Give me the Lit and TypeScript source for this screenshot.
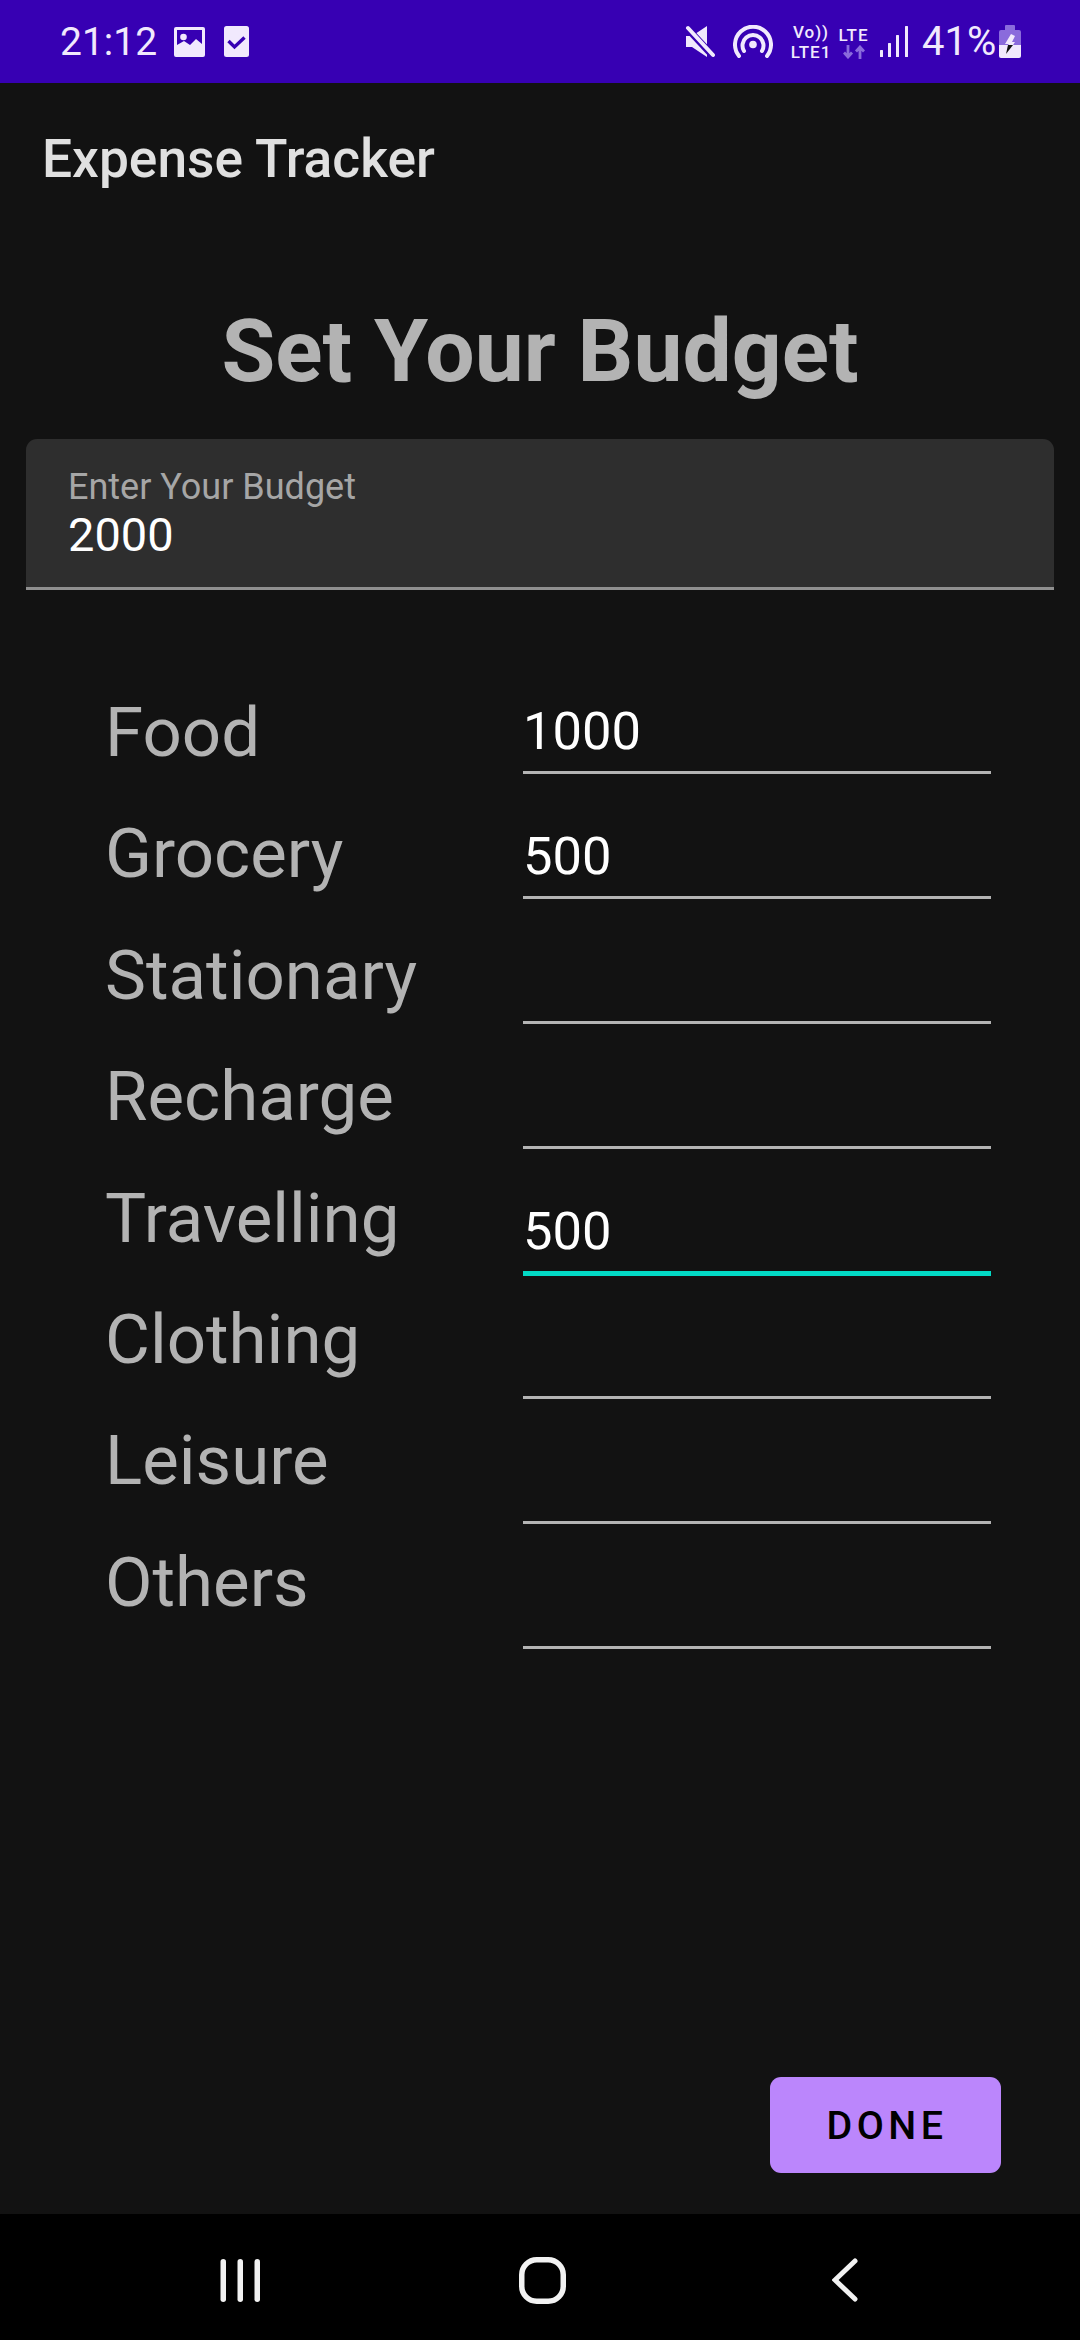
import { css, html, LitElement, svg } from "lit";
import { customElement } from "lit/decorators.js";

const CATEGORIES = [
  { name: "Food", value: "1000" },
  { name: "Grocery", value: "500" },
  { name: "Stationary", value: "" },
  { name: "Recharge", value: "" },
  { name: "Travelling", value: "500", focused: true },
  { name: "Clothing", value: "" },
  { name: "Leisure", value: "" },
  { name: "Others", value: "" },
];

const imageIcon = svg`<svg class="icon" width="31" height="30" viewBox="0 0 31 30">
  <path fill-rule="evenodd" fill="#f1e9fd" d="M2 0h27a2 2 0 0 1 2 2v26a2 2 0 0 1-2 2H2a2 2 0 0 1-2-2V2a2 2 0 0 1 2-2zM3 3v15l7-4 6 4 6-6 6 5V3z"/>
  <circle cx="9.500" cy="10" r="3.300" fill="#f1e9fd"/>
</svg>`;

const checkIcon = svg`<svg class="icon" width="25" height="31" viewBox="0 0 25 31">
  <rect width="25" height="31" rx="2.500" fill="#f1e9fd"/>
  <path d="M4.500 15l6 6 10-9.500" fill="none" stroke="#3700b3" stroke-width="3.400"/>
</svg>`;

const muteIcon = svg`<svg width="30" height="33" viewBox="0 0 30 33">
  <path fill="#f1e9fd" d="M1 11h6L22 1v31L7 22H1z"/>
  <path d="M1 2l27 29" stroke="#3700b3" stroke-width="7"/>
  <path d="M3 3l25 27" stroke="#f1e9fd" stroke-width="4" stroke-linecap="round"/>
</svg>`;

const hotspotIcon = svg`<svg width="40" height="34" viewBox="0 0 40 34" fill="none" stroke="#f1e9fd" stroke-width="4" stroke-linecap="round">
  <path d="M6 31a18 18 0 1 1 28 0"/>
  <path d="M11 26a10.500 10.500 0 1 1 18 0"/>
  <circle cx="20" cy="19.500" r="3.800" fill="#f1e9fd" stroke="none"/>
</svg>`;

const arrowsIcon = svg`<svg width="22" height="14" viewBox="0 0 22 14" fill="none" stroke="#8a6bdc" stroke-width="2.800">
  <path d="M5 0v12M1 7.500L5 12l4-4.500"/>
  <path d="M17 14V2M13 6.500L17 2l4 4.500"/>
</svg>`;

const signalIcon = svg`<svg width="28" height="31" viewBox="0 0 28 31" fill="#f1e9fd">
  <rect x="0" y="24" width="3" height="7" rx="0.500"/>
  <rect x="8" y="17" width="3" height="14" rx="0.500"/>
  <rect x="16" y="9" width="3" height="22" rx="0.500"/>
  <rect x="25" y="0" width="3" height="31" rx="0.500"/>
</svg>`;

const batteryIcon = svg`<svg width="22" height="33" viewBox="0 0 22 33">
  <path fill="#8a6bdc" d="M6 1a1 1 0 0 1 1-1h8a1 1 0 0 1 1 1v4h4a2 2 0 0 1 2 2v13H0V7a2 2 0 0 1 2-2h4z"/>
  <path fill="#f1e9fd" d="M0 20h22v11a2 2 0 0 1-2 2H2a2 2 0 0 1-2-2z"/>
  <path fill="#f1e9fd" d="M12 9L6 19h4l-1 1h5l2-3h-3l3-6z"/>
  <path fill="#111" d="M9 20h5l-7 9z"/>
</svg>`;

@customElement("app-root")
export class AppRoot extends LitElement {
  static styles = [
    css`
      :host {
        display: flex;
        flex-direction: column;
        height: 2340px;
        background-color: #121212;
        font-family: Roboto, "Liberation Sans", sans-serif;
      }

      .status-bar {
        display: flex;
        align-items: center;
        justify-content: space-between;
        height: 83px;
        flex: none;
        padding: 0 59px 0 60px;
        box-sizing: border-box;
        background-color: #3700b3;
        color: #f1e9fd;
      }

      .status-left,
      .status-right {
        display: flex;
        align-items: center;
      }

      .time {
        font-size: 39px;
        margin-right: 17px;
      }

      .icon + .icon {
        margin-left: 19px;
      }

      .status-right svg {
        flex: none;
      }

      .hotspot {
        display: flex;
        margin: 0 19px 0 18px;
      }

      .mini {
        display: flex;
        flex-direction: column;
        align-items: center;
        width: 38px;
        font-size: 17px;
        line-height: 20px;
        font-weight: 500;
        letter-spacing: 1px;
        white-space: nowrap;
      }

      .net {
        width: 31px;
        margin: 0 11px 0 8px;
      }

      .battery-pct {
        width: 70px;
        font-size: 40px;
        white-space: nowrap;
        margin: 0 7px 0 14px;
      }

      main {
        flex: 1;
        display: flex;
        flex-direction: column;
      }

      .app-title {
        margin: 0;
        padding: 46px 0 0 42px;
        font-size: 53.300px;
        line-height: 60px;
        font-weight: 500;
        color: #e0e0e0;
      }

      h1 {
        margin: 0;
        padding-top: 112px;
        font-size: 87.500px;
        line-height: 100px;
        font-weight: 700;
        text-align: center;
        color: #b3b3b3;
      }

      .budget {
        margin: 38px 26px 0;
        height: 151px;
        box-sizing: border-box;
        padding: 25px 42px 0;
        border-radius: 11px 11px 0 0;
        border-bottom: 3px solid #8f8f8f;
        background-color: #2e2e2e;
      }

      .budget-label {
        font-size: 36px;
        line-height: 46px;
        color: #a6a6a6;
      }

      .budget-value {
        font-size: 47px;
        line-height: 50px;
        color: #fff;
      }

      .form {
        display: grid;
        grid-template-columns: 418px 468px;
        padding: 59px 0 0 105px;
      }

      .labels {
        padding-top: 23px;
      }

      .label {
        height: 121.400px;
        line-height: 121.400px;
        font-size: 69px;
        color: #b3b3b3;
      }

      .field {
        height: 125px;
        box-sizing: border-box;
        border-bottom: 3px solid #b3b3b3;
        font-size: 52.500px;
        line-height: 60px;
        color: #fff;
        padding-top: 52px;
      }

      .field.focused {
        height: 127px;
        border-bottom: 5px solid #03dac5;
      }

      .focused + .field {
        height: 123px;
      }

      .actions {
        margin-top: auto;
        display: flex;
        justify-content: flex-end;
        padding: 0 79px 41px 0;
      }

      .done {
        width: 231px;
        height: 96px;
        box-sizing: border-box;
        padding-left: 3px;
        border-radius: 11px;
        display: flex;
        align-items: center;
        justify-content: center;
        background-color: #bb86fc;
        color: #000;
        font-size: 39.400px;
        font-weight: 500;
        letter-spacing: 4.500px;
      }

      .nav {
        flex: none;
        height: 126px;
        box-sizing: border-box;
        padding: 6px 0 0 5px;
        display: flex;
        align-items: center;
        justify-content: center;
        background-color: #000;
      }

      .nav-slot {
        width: 302px;
        display: flex;
        justify-content: center;
      }
    `,
  ];

  render() {
    return html`
      <div class="status-bar">
        <div class="status-left">
          <span class="time">21:12</span>
          ${imageIcon}${checkIcon}
        </div>
        <div class="status-right">
          ${muteIcon}
          <span class="hotspot">${hotspotIcon}</span>
          <span class="mini"><span>Vo))</span><span>LTE1</span></span>
          <span class="mini net"><span>LTE</span>${arrowsIcon}</span>
          ${signalIcon}
          <span class="battery-pct">41%</span>
          ${batteryIcon}
        </div>
      </div>
      <main>
        <p class="app-title">Expense Tracker</p>
        <h1>Set Your Budget</h1>
        <div class="budget">
          <div class="budget-label">Enter Your Budget</div>
          <div class="budget-value">2000</div>
        </div>
        <div class="form">
          <div class="labels">
            ${CATEGORIES.map((c) => html`<div class="label">${c.name}</div>`)}
          </div>
          <div>
            ${CATEGORIES.map(
              (c) => html`<div class="field ${c.focused ? "focused" : ""}">${c.value}</div>`,
            )}
          </div>
        </div>
        <div class="actions"><div class="done">DONE</div></div>
      </main>
      <div class="nav">
        <div class="nav-slot">
          <svg width="41" height="43" viewBox="0 0 41 43" fill="#f2f2f2">
            <rect x="0.500" width="5.500" height="43" rx="2.750"/>
            <rect x="17.500" width="5.500" height="43" rx="2.750"/>
            <rect x="34.500" width="5.500" height="43" rx="2.750"/>
          </svg>
        </div>
        <div class="nav-slot">
          <svg width="47" height="47" viewBox="0 0 47 47" fill="none" stroke="#f2f2f2" stroke-width="5.500">
            <rect x="2.750" y="2.750" width="41.500" height="41.500" rx="15"/>
          </svg>
        </div>
        <div class="nav-slot">
          <svg width="26" height="44" viewBox="0 0 26 44" fill="none" stroke="#f2f2f2" stroke-width="5" stroke-linecap="round">
            <path d="M23 3L3 22l20 19"/>
          </svg>
        </div>
      </div>
    `;
  }
}
